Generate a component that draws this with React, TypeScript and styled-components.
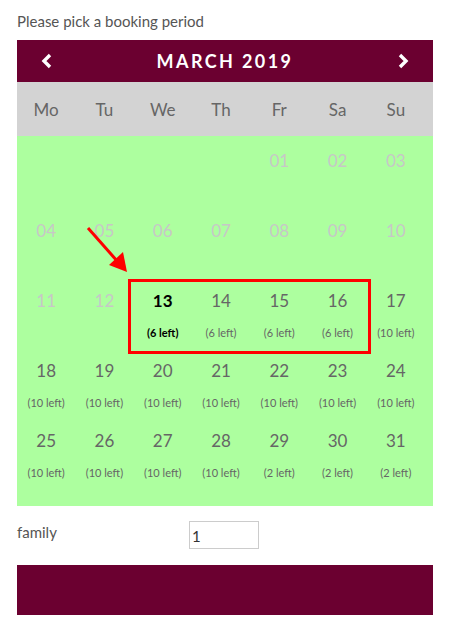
import React from "react";
import styled, { createGlobalStyle } from "styled-components";

const GlobalStyle = createGlobalStyle`
  body {
    margin: 0;
    background: #ffffff;
    font-family: "Source Sans Pro", "Lato", "Noto Sans", sans-serif;
  }
`;

const Page = styled.div`
  width: 416px;
  padding: 10px 17px 0;
  position: relative;
`;

const Intro = styled.div`
  font-size: 15px;
  color: #555555;
  height: 30px;
  line-height: 22px;
`;

const Header = styled.div`
  height: 42px;
  background: #6b0030;
  color: #ffffff;
  display: flex;
  align-items: center;
  justify-content: space-between;
  padding: 0 22px;
`;

const Title = styled.div`
  font-size: 18px;
  font-weight: 700;
  letter-spacing: 2.4px;
`;

const Nav = styled.span`
  display: flex;
  width: 16px;
  justify-content: center;
`;

const Weekdays = styled.div`
  display: grid;
  grid-template-columns: repeat(7, 1fr);
  background: #d3d3d3;
  height: 54px;
  align-items: center;
  padding-right: 8px;
`;

const Weekday = styled.div`
  text-align: center;
  font-size: 17px;
  color: #666666;
`;

const Days = styled.div`
  position: relative;
  display: grid;
  grid-template-columns: repeat(7, 1fr);
  grid-auto-rows: 70px;
  background: #adff9f;
  padding-bottom: 20px;
  padding-right: 8px;
`;

const Cell = styled.div<{ $muted?: boolean; $active?: boolean }>`
  display: flex;
  flex-direction: column;
  align-items: center;
  color: ${(p) => (p.$muted ? "#c7c7c7" : p.$active ? "#000000" : "#666666")};
  font-weight: ${(p) => (p.$active ? 700 : 400)};
`;

const Num = styled.div`
  font-size: 17px;
  line-height: 22px;
  margin-top: 14px;
`;

const Left = styled.div`
  font-size: 11px;
  line-height: 14px;
  margin-top: 14px;
`;

const Highlight = styled.div`
  position: absolute;
  left: 111px;
  top: 143px;
  width: 237px;
  height: 69px;
  border: 3px solid #ff0000;
  pointer-events: none;
`;

const Arrow = styled.svg`
  position: absolute;
  left: 0;
  top: 0;
  pointer-events: none;
`;

const Field = styled.div`
  display: flex;
  align-items: flex-start;
  padding-top: 15px;
  height: 44px;
`;

const Label = styled.label`
  width: 172px;
  font-size: 15px;
  color: #555555;
  padding-top: 2px;
`;

const Input = styled.input`
  width: 70px;
  height: 28px;
  box-sizing: border-box;
  border: 1px solid #cccccc;
  font-size: 15px;
  font-family: inherit;
  padding: 2px 2px 0;
  color: #333333;
`;

const Submit = styled.button`
  display: block;
  width: 416px;
  height: 50px;
  border: none;
  background: #6b0030;
`;

const weekdays = ["Mo", "Tu", "We", "Th", "Fr", "Sa", "Su"];

const leftFor = (d: number) => {
  if (d >= 13 && d <= 16) return 6;
  if (d >= 29) return 2;
  return 10;
};

export default function App() {
  const cells: React.ReactNode[] = [];
  for (let i = 0; i < 4; i++) cells.push(<Cell key={"e" + i} />);
  for (let d = 1; d <= 31; d++) {
    const muted = d < 13;
    cells.push(
      <Cell key={d} $muted={muted} $active={d === 13}>
        <Num>{String(d).padStart(2, "0")}</Num>
        {!muted && <Left>({leftFor(d)} left)</Left>}
      </Cell>
    );
  }

  return (
    <>
      <GlobalStyle />
      <Page>
        <Intro>Please pick a booking period</Intro>
        <Header>
          <Nav>
            <svg width="12" height="16" viewBox="0 0 12 16">
              <path d="M9 2 L3 8 L9 14" stroke="#fff" strokeWidth="3.4" fill="none" />
            </svg>
          </Nav>
          <Title>MARCH 2019</Title>
          <Nav>
            <svg width="12" height="16" viewBox="0 0 12 16">
              <path d="M3 2 L9 8 L3 14" stroke="#fff" strokeWidth="3.4" fill="none" />
            </svg>
          </Nav>
        </Header>
        <Weekdays>
          {weekdays.map((w) => (
            <Weekday key={w}>{w}</Weekday>
          ))}
        </Weekdays>
        <Days>
          {cells}
          <Highlight />
        </Days>
        <Field>
          <Label>family</Label>
          <Input defaultValue="1" />
        </Field>
        <Submit />
        <Arrow width="454" height="623" viewBox="0 0 454 623">
          <line x1="88" y1="228" x2="118" y2="262" stroke="#ff0000" strokeWidth="3" />
          <polygon points="127,272 109,265 123,252" fill="#ff0000" />
        </Arrow>
      </Page>
    </>
  );
}
